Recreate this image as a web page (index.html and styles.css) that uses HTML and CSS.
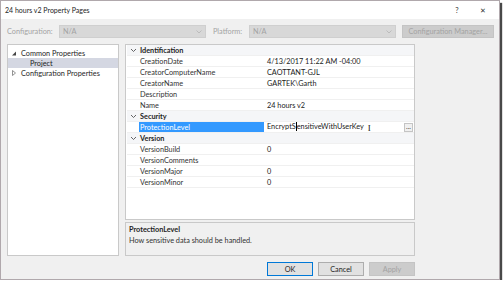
FILE: index.html
```html
<!DOCTYPE html>
<html lang="en">
<head>
  <meta charset="UTF-8" />
  <title>24 hours v2 Property Pages</title>
  <link rel="stylesheet" href="styles.css">
</head>
<body>

<div class="window">

  <div class="titlebar">
    <span class="title">24 hours v2 Property Pages</span>
    <span class="title-btn help">?</span>
    <span class="title-btn close">&#x2715;</span>
  </div>

  <div class="config-row">
    <span class="config-label">Configuration:</span>
    <div class="combo combo-config">N/A
      <svg class="chev" width="6" height="4" viewBox="0 0 6 4"><path d="M0.5 0.5 L3 3 L5.5 0.5" fill="none" stroke="#b5b5b5" stroke-width="0.8"/></svg>
    </div>
    <span class="config-label platform">Platform:</span>
    <div class="combo combo-platform">N/A
      <svg class="chev" width="6" height="4" viewBox="0 0 6 4"><path d="M0.5 0.5 L3 3 L5.5 0.5" fill="none" stroke="#b5b5b5" stroke-width="0.8"/></svg>
    </div>
    <div class="btn btn-disabled btn-manager">Configuration Manager...</div>
  </div>

  <div class="main">
    <div class="tree">
      <div class="tree-item">
        <svg class="arrow" width="10" height="6" viewBox="0 0 10 6"><path d="M2 5.5 L6 5.5 L6 1.5 Z" fill="#444"/></svg>Common Properties
      </div>
      <div class="tree-item child selected">Project</div>
      <div class="tree-item">
        <svg class="arrow" width="10" height="6" viewBox="0 0 10 6"><path d="M2.5 0.5 L5.5 3 L2.5 5.5 Z" fill="none" stroke="#777" stroke-width="0.8"/></svg>Configuration Properties
      </div>
    </div>

    <div class="right">
      <div class="grid">
        <div class="cat">
          <svg class="cat-chev" width="13" height="5" viewBox="0 0 13 5"><path d="M4 1 L6.5 3.5 L9 1" fill="none" stroke="#555" stroke-width="0.9"/></svg>Identification
        </div>
        <div class="prop"><span class="name">CreationDate</span><span class="val">4/13/2017 11:22 AM -04:00</span></div>
        <div class="prop"><span class="name">CreatorComputerName</span><span class="val">CAOTTANT-GJL</span></div>
        <div class="prop"><span class="name">CreatorName</span><span class="val">GARTEK\Garth</span></div>
        <div class="prop"><span class="name">Description</span><span class="val"></span></div>
        <div class="prop"><span class="name">Name</span><span class="val">24 hours v2</span></div>
        <div class="cat">
          <svg class="cat-chev" width="13" height="5" viewBox="0 0 13 5"><path d="M4 1 L6.5 3.5 L9 1" fill="none" stroke="#555" stroke-width="0.9"/></svg>Security
        </div>
        <div class="prop active">
          <span class="name">ProtectionLevel</span>
          <span class="val">EncryptS<span class="caret"></span>ensitiveWithUserKey<span class="ibeam">I</span></span>
          <span class="ellipsis">...</span>
        </div>
        <div class="cat">
          <svg class="cat-chev" width="13" height="5" viewBox="0 0 13 5"><path d="M4 1 L6.5 3.5 L9 1" fill="none" stroke="#555" stroke-width="0.9"/></svg>Version
        </div>
        <div class="prop"><span class="name">VersionBuild</span><span class="val">0</span></div>
        <div class="prop"><span class="name">VersionComments</span><span class="val"></span></div>
        <div class="prop"><span class="name">VersionMajor</span><span class="val">0</span></div>
        <div class="prop"><span class="name">VersionMinor</span><span class="val">0</span></div>
      </div>
      <div class="desc">
        <div class="desc-title">ProtectionLevel</div>
        <div class="desc-text">How sensitive data should be handled.</div>
      </div>
    </div>
  </div>

  <div class="buttons">
    <div class="btn btn-ok">OK</div>
    <div class="btn">Cancel</div>
    <div class="btn btn-disabled">Apply</div>
  </div>

</div>

</body>
</html>
```

FILE: styles.css
```css
:root {
  --dialog-bg: #f0f0f0;
  --border: #c9c9c9;
  --grey-text: #a3a3a3;
  --text: #1e1e1e;
  --select-blue: #3399ff;
}

* {
  box-sizing: border-box;
}

body {
  margin: 0;
  background: #fff;
  font-family: 'Lato', 'Open Sans', sans-serif;
  font-size: 7.3px;
  color: var(--text);
}

.window {
  width: 500px;
  height: 280px;
  background: var(--dialog-bg);
  border: 1px solid #b0a8ac;
  box-shadow: 2px 3px 1px rgba(40, 40, 40, 0.85);
  display: flex;
  flex-direction: column;
}

/* title bar */
.titlebar {
  height: 18px;
  background: #fff;
  display: flex;
  align-items: center;
  padding-left: 4px;
  font-size: 7px;
}

.title {
  flex: 1;
}

.title-btn {
  width: 28px;
  text-align: center;
  color: #333;
  font-size: 7.6px;
}

.help {
  margin-right: -2px;
}

.close {
  font-size: 7px;
  margin-right: 2px;
}

/* configuration row */
.config-row {
  display: flex;
  align-items: center;
  height: 13px;
  margin-top: 6px;
  padding-left: 6px;
}

.config-label {
  color: var(--grey-text);
  width: 52px;
}

.config-label.platform {
  width: 36px;
  margin-left: 7px;
}

.combo {
  height: 13px;
  background: #d8d8d8;
  border: 1px solid #cfcfcf;
  color: var(--grey-text);
  display: flex;
  align-items: center;
  padding-left: 3px;
  position: relative;
}

.combo-config {
  width: 147px;
}

.combo-platform {
  width: 147px;
}

.chev {
  position: absolute;
  right: 3px;
  top: 4px;
}

.btn {
  height: 14px;
  width: 46px;
  background: #e1e1e1;
  border: 1px solid #adadad;
  display: flex;
  align-items: center;
  justify-content: center;
}

.btn-disabled {
  background: #cccccc;
  border-color: #c4c4c4;
  color: var(--grey-text);
}

.btn-manager {
  width: 92px;
  height: 13px;
  margin-left: 6px;
}

.btn-ok {
  border-color: #0078d7;
}

/* main panels */
.main {
  display: flex;
  margin-top: 6px;
  height: 212px;
}

.tree {
  width: 112px;
  margin-left: 6px;
  background: #fff;
  border: 1px solid var(--border);
  padding-top: 3px;
}

.tree-item {
  height: 10px;
  display: flex;
  align-items: center;
  padding-left: 2px;
}

.tree-item.child {
  padding-left: 22px;
}

.tree-item.selected {
  background: #d4d7e2;
}

.arrow {
  margin-right: 1px;
}

.right {
  width: 290px;
  margin-left: 6px;
  display: flex;
  flex-direction: column;
}

.grid {
  flex: 1;
  background: #fff;
  border: 1px solid var(--border);
  padding-left: 1px;
}

.cat,
.prop {
  height: 11px;
  display: flex;
  align-items: center;
  border-bottom: 1px solid #f0f0f0;
}

.cat {
  background: #f5f6f8;
  font-weight: 700;
}

.cat-chev {
  flex: none;
}

.prop {
  padding-left: 12px;
  position: relative;
}

.name {
  width: 125px;
  height: 10px;
  display: flex;
  align-items: center;
  padding-left: 1px;
  color: #333;
}

.val {
  padding-left: 3px;
  color: #222;
}

.prop.active .name {
  background: var(--select-blue);
  color: #fff;
}

.caret {
  display: inline-block;
  width: 1px;
  height: 9px;
  background: #000;
  vertical-align: -2px;
}

.ibeam {
  font-family: 'Liberation Serif', serif;
  font-size: 9px;
  margin-left: 4px;
  vertical-align: -2px;
}

.ellipsis {
  position: absolute;
  right: 1px;
  top: 1px;
  width: 9px;
  height: 9px;
  border: 1px solid #c4c4c4;
  background: #f0f0f0;
  font-size: 7px;
  line-height: 5px;
  text-align: center;
  color: #444;
}

.desc {
  height: 34px;
  margin-top: 2px;
  border: 1px solid var(--border);
  padding: 2px 3px;
}

.desc-title {
  font-weight: 700;
  height: 11px;
}

.desc-text {
  color: #333;
}

/* bottom buttons */
.buttons {
  display: flex;
  gap: 5px;
  margin-top: 6px;
  padding-left: 266px;
}
```
